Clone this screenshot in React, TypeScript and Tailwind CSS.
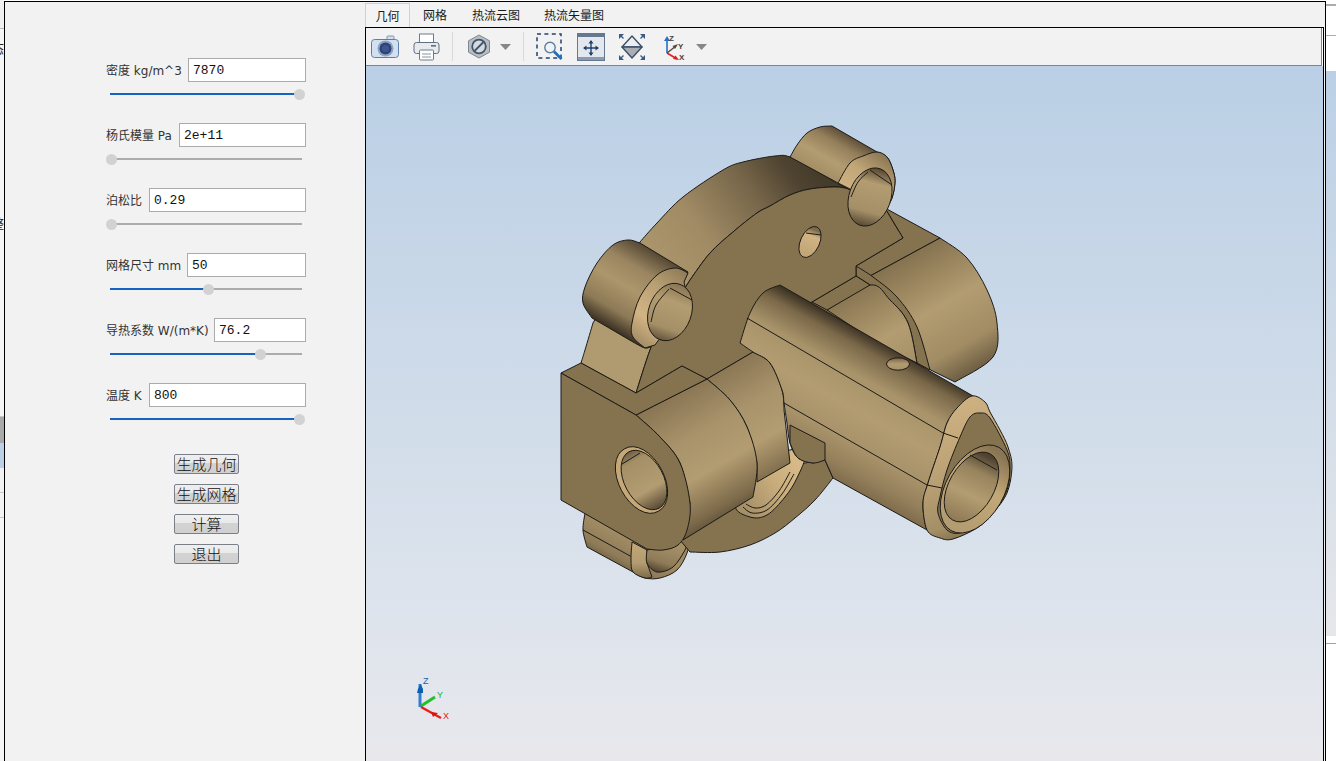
import React from "react";

type Pt = [number, number];
const parse = (s: string): Pt[] =>
  s.trim().split(/\s+/).map((p) => p.split(",").map(Number) as Pt);
const f = (n: number) => n.toFixed(1);
const seg = (a: Pt, b: Pt, c: Pt, d: Pt) =>
  `C${f(b[0] + (c[0] - a[0]) / 6)} ${f(b[1] + (c[1] - a[1]) / 6)} ${f(c[0] - (d[0] - b[0]) / 6)} ${f(c[1] - (d[1] - b[1]) / 6)} ${f(c[0])} ${f(c[1])}`;
const run = (pts: Pt[]) => {
  let out = "";
  for (let i = 0; i < pts.length - 1; i++) {
    out += seg(pts[Math.max(i - 1, 0)], pts[i], pts[i + 1], pts[Math.min(i + 2, pts.length - 1)]);
  }
  return out;
};
// each string is one smooth run; runs are joined by straight lines
const open = (...runs: string[]) =>
  runs
    .map((r, i) => {
      const p = parse(r);
      return `${i === 0 ? "M" : "L"}${f(p[0][0])} ${f(p[0][1])}${run(p)}`;
    })
    .join("");
const shut = (...runs: string[]) => open(...runs) + "Z";
const blob = (s: string) => {
  const p = parse(s);
  const n = p.length;
  let out = `M${f(p[0][0])} ${f(p[0][1])}`;
  for (let i = 0; i < n; i++) out += seg(p[(i - 1 + n) % n], p[i], p[(i + 1) % n], p[(i + 2) % n]);
  return out + "Z";
};
// rotated ellipse as a path, so that user-space gradients stay in page coordinates
const ell = (cx: number, cy: number, rx: number, ry: number, deg: number) => {
  const a = (deg * Math.PI) / 180;
  const dx = ry * Math.sin(a);
  const dy = -ry * Math.cos(a);
  return `M${f(cx + dx)} ${f(cy + dy)}A${rx} ${ry} ${deg} 1 0 ${f(cx - dx)} ${f(cy - dy)}A${rx} ${ry} ${deg} 1 0 ${f(cx + dx)} ${f(cy + dy)}Z`;
};

const FLAT = "#85724f";
const EDGE = "#1d1b17";

const Grad = ({ id, x1, y1, x2, y2, stops }: { id: string; x1: number; y1: number; x2: number; y2: number; stops: [number, string][] }) => (
  <linearGradient id={id} gradientUnits="userSpaceOnUse" x1={x1} y1={y1} x2={x2} y2={y2}>
    {stops.map(([o, c]) => (
      <stop key={o} offset={o} stopColor={c} />
    ))}
  </linearGradient>
);

function Part({ d, fill = FLAT }: { d: string; fill?: string }) {
  return <path d={d} fill={fill} stroke={EDGE} strokeWidth={1} strokeLinejoin="round" />;
}
function Line({ d }: { d: string }) {
  return <path d={d} fill="none" stroke={EDGE} strokeWidth={1} />;
}

function Model() {
  return (
    <svg className="block" width={958} height={695} viewBox="366 66 958 695">
      <defs>
        <Grad id="rim" x1={640} y1={290} x2={810} y2={165} stops={[[0, "#b09a70"], [0.4, "#a08b64"], [0.7, "#77664a"], [0.9, "#4f4431"], [1, "#463c2b"]]} />
        <Grad id="lobe" x1={905} y1={257} x2={980} y2={387} stops={[[0, "#85724f"], [0.4, "#b39c71"], [0.7, "#a18c64"], [0.9, "#6b5b41"], [1, "#3f3526"]]} />
        <Grad id="topLug" x1={855} y1={139} x2={830} y2={183} stops={[[0, "#5f5039"], [0.25, "#947f5b"], [0.6, "#b39c71"], [1, "#a08b63"]]} />
        <Grad id="leftLug" x1={664} y1={258} x2={620} y2={333} stops={[[0, "#574a35"], [0.25, "#9a8560"], [0.5, "#ac966c"], [0.8, "#8d7a56"], [1, "#3f3526"]]} />
        <Grad id="botLug" x1={612} y1={530} x2={592} y2={566} stops={[[0, "#a08b63"], [0.5, "#8f7b58"], [1, "#4a3f2c"]]} />
        <Grad id="body" x1={670} y1={398} x2={745} y2={528} stops={[[0, "#8a7654"], [0.3, "#a8936b"], [0.55, "#b39c71"], [0.8, "#7c6a4a"], [1, "#3a3123"]]} />
        <Grad id="tube" x1={860} y1={331} x2={791} y2={456} stops={[[0, "#3f3526"], [0.1, "#7a6849"], [0.28, "#a8936a"], [0.5, "#b39c71"], [0.72, "#a8926a"], [0.88, "#94805b"], [1, "#7e6b4b"]]} />
        <Grad id="tip" x1={945} y1={410} x2={985} y2={535} stops={[[0, "#cdb080"], [0.5, "#b9a074"], [0.85, "#a48f66"], [1, "#7e6b4b"]]} />
        <Grad id="tipRing" x1={950} y1={520} x2={1000} y2={455} stops={[[0, "#b39c71"], [0.6, "#c3a877"], [1, "#8a7654"]]} />
        <Grad id="holeA" x1={985} y1={455} x2={955} y2={520} stops={[[0, "#4e4230"], [0.25, "#97835d"], [0.6, "#b39c71"], [1, "#8e7a56"]]} />
        <Grad id="holeB" x1={625} y1={450} x2={660} y2={512} stops={[[0, "#5a4c36"], [0.2, "#a48f67"], [0.65, "#b39c71"], [1, "#463b2a"]]} />
        <Grad id="holeC" x1={680} y1={285} x2={660} y2={342} stops={[[0, "#8a7654"], [0.3, "#b39c71"], [0.75, "#a48f67"], [1, "#5a4c36"]]} />
        <Grad id="holeD" x1={880} y1={170} x2={865} y2={226} stops={[[0, "#5a4c36"], [0.25, "#b39c71"], [0.75, "#a48f67"], [1, "#5a4c36"]]} />
        <Grad id="holeE" x1={815} y1={230} x2={805} y2={255} stops={[[0, "#7c6a4a"], [0.25, "#d2b483"], [1, "#c1a576"]]} />
        <Grad id="holeF" x1={898} y1={357} x2={898} y2={371} stops={[[0, "#6b5b41"], [0.5, "#b39c71"], [1, "#a48f67"]]} />
        <Grad id="holeG" x1={670} y1={545} x2={660} y2={575} stops={[[0, "#a48f67"], [0.6, "#8f7b58"], [1, "#453a29"]]} />
        <Grad id="ring" x1={745} y1={510} x2={800} y2={470} stops={[[0, "#a48f67"], [0.6, "#c9ad7c"], [1, "#d6b987"]]} />
        <Grad id="fillet" x1={885} y1={155} x2={845} y2={210} stops={[[0, "#8a7654"], [0.4, "#c2a778"], [0.7, "#cdb080"], [1, "#b39c71"]]} />
        <Grad id="fillet2" x1={690} y1={270} x2={635} y2={345} stops={[[0, "#8a7654"], [0.35, "#b8a074"], [0.7, "#d2b484"], [1, "#9c8760"]]} />
        <Grad id="fillet3" x1={640} y1={540} x2={640} y2={578} stops={[[0, "#c4a878"], [0.6, "#b39c71"], [1, "#7e6b4b"]]} />
      </defs>

      {/* back rim of the flange */}
      <Part
        d={shut(
          "640,242 657,223 683,197 723,170 743,162 775,156 790,157 815,170 838,184",
          "852,190 837,187 810,189 790,195 770,206 757,213 733,232 710,253 690,280",
          "660,328 650,350 636,393",
          "581,363 585,350 593,323"
        )}
        fill="url(#rim)"
      />

      {/* filler behind the tube, so no background shows through the seams */}
      <path d="M795 300L880 270L925 380L840 370Z" fill={FLAT} />

      {/* right lobe behind the tube */}
      <Part d={shut("885,208", "940,238", "870,276", "856,276", "856,266", "903,238")} />
      <Part d={shut("940,238 967,258 987,290 997,323 993,357 955,382", "880,345", "870,276")} fill="url(#lobe)" />
      <Part d={shut("856,266 873,277 897,297 917,327 930,370", "917,363 908,323 890,300 870,285 856,276")} />
      <Part d={shut("827,310 870,285 890,300 908,323 917,363", "880,345")} fill="url(#lobe)" />
      <Part d={shut("812,302", "856,276", "870,285", "827,310")} />

      {/* flat face of the flange */}
      <Part
        d={shut(
          "690,280 710,253 733,232 757,213 770,206 790,195 810,189 837,187 852,190",
          "885,208 895,225 903,238",
          "856,266",
          "856,276",
          "812,302",
          "780,320",
          "753,352",
          "707,379",
          "682,366",
          "636,393 650,350 660,328 690,280"
        )}
      />
      <Part d={ell(810, 242, 9.5, 16.5, 25)} fill="url(#holeE)" />
      <Line d="M806 233L821 235" />

      {/* top lug */}
      <Part
        d={shut("790,157 797,145 807,133 820,127 832,126", "877,152 887,157 893,170 895,182 892,198 885,210", "838,183")}
        fill="url(#topLug)"
      />
      <Part
        d={shut("838,183 850,163 863,156 877,152 887,157 893,170 895,182 892,198 885,210", "866,224", "853,210", "852,190")}
        fill="url(#fillet)"
      />
      <Part d={ell(870, 197, 20.8, 30, 20)} fill="url(#holeD)" />
      <Line d="M870 170L892 185" />
      <Line d={open("851,197 858,182 868,172")} />

      {/* left lug */}
      <Part
        d={shut("640,243 628,240 613,245 597,263 585,287 583,303 592,318", "633,342 645,348 652,346", "688,272")}
        fill="url(#leftLug)"
      />
      <Part
        d={shut("688,273 675,268 657,275 640,297 632,323 633,337 645,348", "655,345", "688,300", "684,282")}
        fill="url(#fillet2)"
      />
      <Part d={ell(670, 312, 20.8, 29.4, 20)} fill="url(#holeC)" />
      <Line d="M670 288L692 300" />
      <Line d={open("651,322 656,305 669,289")} />

      {/* lower flange and the lug below */}
      <Part
        d={shut("585,513 583,530 587,547", "633,572 645,578 660,578 677,570 687,553 690,535", "640,540")}
        fill="url(#botLug)"
      />
      <Line d="M583 530L632 557" />
      <Part d={shut("632,542 631,560 633,572 645,578 652,577", "647,563 647,550")} fill="url(#fillet3)" />
      <Part d={shut("647,550 647,563 657,572 673,567 685,550 688,540")} fill="url(#holeG)" />
      <Part d={shut("833,478 815,500 795,518 775,533 750,545 720,552 690,552", "680,540", "757,470", "825,460")} />
      <Part d={blob("735,505 750,470 790,450 805,455 797,478 785,497 767,515 750,517")} fill="url(#ring)" />
      <Line d={open("743,507 752,513 767,510 782,494 794,474")} />
      <Line d={open("746,504 755,508 766,505 779,491 790,472")} />

      {/* front block and cylinders */}
      <Part d={shut("707,379", "753,352 770,363 782,390 784,410", "790,463", "757,482", "757,463 747,427 730,400 707,379")} fill="url(#body)" />
      <Part d={shut("636,415", "707,379 730,400 747,427 757,463 753,497", "683,540", "690,503 680,463 660,437 636,415")} fill="url(#body)" />
      <Part d={shut("561,373", "581,363", "636,393", "682,366", "707,379", "636,415")} />
      <Part d={shut("561,373", "636,415 660,437 680,463 690,503 687,530 678,545 663,550 647,549", "561,500")} />
      <Part d={ell(641.5, 480, 21.8, 35.5, -28)} fill="#c4a878" />
      <Part d={ell(644, 480, 19.5, 32, -28)} fill="url(#holeB)" />
      <Line d="M622 464L640 453" />

      {/* long tube */}
      <Part
        d={shut(
          "740,343 750,313 763,293 780,285",
          "980,400",
          "957,408 947,423 940,447 928,483 923,503 925,523 927,530",
          "833,478",
          "825,460",
          "813,463 798,458 790,443 787,423 784,403 782,390 770,363 753,352 740,343"
        )}
        fill="url(#tube)"
      />
      <Part d={shut("790,425", "825,443", "825,460 813,463 798,458 790,443")} />
      <Line d="M747 318L943 433" />
      <Line d="M784 403L927 485" />
      <Part d={ell(898, 364, 11.5, 6.2, 0)} fill="url(#holeF)" />

      {/* end of the tube */}
      <Part
        d={blob("972,396 985,402 990,412 1000,430 1008,447 1012,467 1007,493 993,513 977,528 953,539 940,538 927,530 923,503 928,483 940,447 947,423 957,408")}
        fill="url(#tip)"
      />
      <Part d={blob("980,413 990,418 1007,450 1010,468 1007,490 993,513 975,524 960,533 947,530 938,513 940,497 947,470 960,437 970,417")} />
      <Line d="M943 433L958 438" />
      <Line d="M927 485L942 488" />
      <Part d={ell(975, 489, 29, 48, 30)} fill="url(#tipRing)" />
      <Part d={ell(971.5, 487, 22, 38, 30)} fill="url(#holeA)" />
      <Line d="M970 455L997 470" />

      {/* axis triad */}
      <path d="M420 707L420 684" stroke="#2f7fd0" strokeWidth={3} />
      <path d="M417 693L423 693L423 689L420.5 684L418 689Z" fill="#0a5fb5" />
      <path d="M421 706L435 697" stroke="#22c02a" strokeWidth={3} />
      <path d="M421 707L441 718" stroke="#ec1c1c" strokeWidth={2.5} />
      <path d="M431 712L438 713L433 717Z" fill="#e01010" />
      <text x={423} y={684} fontSize={9} fill="#1f5fa8" fontFamily="'Liberation Sans',sans-serif">Z</text>
      <text x={437} y={698} fontSize={9} fill="#22b02a" fontFamily="'Liberation Sans',sans-serif">Y</text>
      <text x={443} y={719} fontSize={9} fill="#e01818" fontFamily="'Liberation Sans',sans-serif">X</text>
    </svg>
  );
}

function Caret() {
  return (
    <svg width={11} height={6} viewBox="0 0 11 6" className="block">
      <path d="M0 0H11L5.5 6Z" fill="#85878a" />
    </svg>
  );
}
function Sep() {
  return <div className="h-[29px] w-px bg-[#d9d9d9]" />;
}

function Toolbar() {
  return (
    <div className="flex h-[38px] items-center border-b border-r border-[#808488] bg-[#f2f2f2] mr-px">
      <svg className="ml-[5px] block" width={28} height={24} viewBox="0 0 28 24">
        <rect x={16} y={1} width={7} height={5} rx={1} fill="#d2dfee" stroke="#7d97b8" />
        <rect x={0.5} y={4.5} width={27} height={18} rx={3} fill="#d2e0f0" stroke="#5d7ea8" />
        <circle cx={14.5} cy={13.5} r={8} fill="#8ea3c0" />
        <circle cx={14.5} cy={13.5} r={6} fill="#2e4379" />
        <circle cx={14.5} cy={13.5} r={3.5} fill="#3f5590" />
      </svg>
      <svg className="ml-[14px] block" width={27} height={28} viewBox="0 0 27 28">
        <rect x={6.5} y={1} width={14} height={9} fill="#fff" stroke="#6e7b88" />
        <rect x={1} y={9.5} width={25} height={11} rx={2.5} fill="#e8ebee" stroke="#5f6f80" />
        <rect x={18} y={12} width={5} height={1.6} fill="#5f6f80" />
        <rect x={6.5} y={17} width={14} height={10} rx={1} fill="#fff" stroke="#6e7b88" />
        <path d="M9 21H18M9 24H18" stroke="#8a96a2" />
      </svg>
      <div className="ml-[12px]"><Sep /></div>
      <svg className="ml-[14px] block" width={24} height={25} viewBox="0 0 24 25">
        <path d="M12 1L22.5 6.8V18.2L12 24L1.5 18.2V6.8Z" fill="#b8bec2" stroke="#7e8890" />
        <circle cx={12} cy={12.5} r={6.8} fill="#d5dade" stroke="#43556e" strokeWidth={1.8} />
        <path d="M7.5 17L16.5 8" stroke="#43556e" strokeWidth={1.8} />
      </svg>
      <div className="ml-[9px]"><Caret /></div>
      <div className="ml-[12px]"><Sep /></div>
      <svg className="ml-[12px] block" width={27} height={27} viewBox="0 0 27 27">
        <rect x={1} y={1} width={24} height={24} fill="none" stroke="#24406e" strokeWidth={1.5} strokeDasharray="4 3.4" />
        <circle cx={14} cy={14.5} r={5.2} fill="#eef3f8" stroke="#5d7d9e" strokeWidth={1.4} />
        <path d="M18 18.5L25.5 26" stroke="#1a6fc0" strokeWidth={2.6} />
      </svg>
      <svg className="ml-[14px] block" width={28} height={28} viewBox="0 0 28 28">
        <rect x={0.5} y={0.5} width={27} height={27} fill="#e3e8ee" stroke="#64788f" />
        <rect x={1} y={1} width={26} height={3} fill="#64788f" />
        <rect x={1} y={24} width={26} height={3} fill="#8b9cb0" />
        <path d="M14 8V22M7 15H21" stroke="#22406e" strokeWidth={1.4} />
        <path d="M14 7L11.5 10.5H16.5ZM14 23L11.5 19.5H16.5ZM6 15L9.5 12.5V17.5ZM22 15L18.5 12.5V17.5Z" fill="#22406e" />
      </svg>
      <svg className="ml-[13px] block" width={28} height={28} viewBox="0 0 28 28">
        <path d="M14 3L24 14H4Z" fill="#eceff2" stroke="#3d4f68" strokeWidth={1.4} strokeLinejoin="round" />
        <path d="M4 14H24L14 25Z" fill="#a9aeb4" stroke="#3d4f68" strokeWidth={1.4} strokeLinejoin="round" />
        <path d="M1 6V1H6ZM27 6V1H22ZM1 22V27H6ZM27 22V27H22Z" fill="#3d5a86" />
        <path d="M2 2L5.5 5.5M26 2L22.5 5.5M2 26L5.5 22.5M26 26L22.5 22.5" stroke="#3d5a86" strokeWidth={1.4} />
      </svg>
      <svg className="ml-[16px] block" width={25} height={28} viewBox="0 0 25 28">
        <path d="M5 20V6" stroke="#2a6fc0" strokeWidth={1.6} />
        <path d="M5 3L2 8H8Z" fill="#2a6fc0" />
        <path d="M5 20L14 13" stroke="#554a3a" strokeWidth={1.4} />
        <path d="M16 11L10.5 13L13 16Z" fill="#554a3a" />
        <path d="M5 20L15 26" stroke="#e02020" strokeWidth={1.6} />
        <path d="M17 27L11 26L13.5 22.5Z" fill="#e02020" />
        <text x={7} y={8} fontSize={8} fontWeight={700} fill="#444" fontFamily="'Liberation Sans',sans-serif">Z</text>
        <text x={16} y={16} fontSize={8} fontWeight={700} fill="#444" fontFamily="'Liberation Sans',sans-serif">Y</text>
        <text x={17} y={27} fontSize={8} fontWeight={700} fill="#444" fontFamily="'Liberation Sans',sans-serif">X</text>
      </svg>
      <div className="ml-[9px]"><Caret /></div>
    </div>
  );
}

const params = [
  { label: "密度 kg/m^3", value: "7870", inputClass: "w-[118px]", pos: 100 },
  { label: "杨氏模量 Pa", value: "2e+11", inputClass: "w-[127px]", pos: 0 },
  { label: "泊松比", value: "0.29", inputClass: "w-[157px]", pos: 0 },
  { label: "网格尺寸 mm", value: "50", inputClass: "w-[119px]", pos: 51.6 },
  { label: "导热系数 W/(m*K)", value: "76.2", inputClass: "w-[92px]", pos: 79.3 },
  { label: "温度 K", value: "800", inputClass: "w-[157px]", pos: 100 },
];

function Param({ label, value, inputClass, pos }: (typeof params)[number]) {
  const thumbX = 1 + (188 * pos) / 100;
  return (
    <div className="h-[65px] w-[200px]">
      <div className="flex h-6 items-center justify-between">
        <span className="whitespace-nowrap pt-[2px] font-['DejaVu_Sans','Noto_Sans_CJK_SC',sans-serif] text-xs text-[#333]">{label}</span>
        <input
          readOnly
          value={value}
          className={`${inputClass} h-6 border border-[#ababab] bg-white px-[4px] font-['Liberation_Mono',monospace] text-[13px] text-[#111] outline-none`}
        />
      </div>
      <div className="relative ml-1 mt-[11px] h-[2px] w-[192px] bg-[#acacac]">
        <div className="h-full bg-[#1565c0]" style={{ width: thumbX }} />
        <div
          className="absolute top-[-4.5px] ml-[-5.5px] h-[11px] w-[11px] rounded-full bg-[#d2d2d2]"
          style={{ left: thumbX }}
        />
      </div>
    </div>
  );
}

function ActionButton({ children }: { children: React.ReactNode }) {
  return (
    <button className="flex h-5 w-[65px] items-center justify-center rounded-[2px] border border-[#7b8088] bg-[linear-gradient(#efefef_0%,#e9e9e9_45%,#d3d3d3_46%,#d0d0d0_100%)] p-0 pb-[2px] text-[15px] font-light leading-none text-[#111]">
      {children}
    </button>
  );
}

function LeftEdge() {
  return (
    <div className="flex h-full w-1 flex-col overflow-hidden bg-[#f6f6f6] text-[13px] leading-4 text-[#222]">
      <div className="h-[29px] border-b border-[#b9b9b9] bg-[#f0f0f0]" />
      <div className="mt-[11px] h-4 whitespace-nowrap"><span className="ml-[-9px]">态</span></div>
      <div className="mt-[159px] h-4 whitespace-nowrap"><span className="ml-[-9px]">整</span></div>
      <div className="mt-[181px] h-[5px] border-b border-[#c8c8c8]" />
      <div className="h-[26px] bg-[#a9a9a9]" />
      <div className="h-[25px] bg-[#bcd0e6]" />
      <div className="h-[25px] border-b border-[#c8c8c8] bg-[#f2f2f2]" />
      <div className="h-[25px] border-b border-[#c8c8c8] bg-[#f2f2f2]" />
    </div>
  );
}

function RightEdge() {
  return (
    <div className="flex h-full flex-1 flex-col bg-white">
      <div className="mt-1 h-[2px] bg-[#acacac]" />
      <div className="mt-[29px] h-px bg-[#acacac]" />
      <div className="mt-[35px] h-[565px] bg-[linear-gradient(#bbd0e6,#e6e7ea)]" />
      <div className="mt-[7px] h-px bg-[#9aa4ae]" />
    </div>
  );
}

export default function App() {
  return (
    <div className="flex h-[761px] w-[1336px] overflow-hidden bg-white font-['Noto_Sans_CJK_SC','Noto_Sans',sans-serif]">
      <LeftEdge />
      <div className="mt-px flex h-[760px] w-[1322px] border-x border-t border-black bg-[#f2f2f2]">
        {/* parameter panel */}
        <div className="w-[360px] pl-[101px] pt-[56px]">
          {params.map((p) => (
            <Param key={p.label} {...p} />
          ))}
          <div className="ml-[68px] mt-[6px] flex flex-col gap-[10px]">
            <ActionButton>生成几何</ActionButton>
            <ActionButton>生成网格</ActionButton>
            <ActionButton>计算</ActionButton>
            <ActionButton>退出</ActionButton>
          </div>
        </div>
        {/* viewer */}
        <div className="flex w-[960px] flex-col">
          <div className="flex h-[25px] items-end text-xs text-[#1a1a1a]">
            <div className="flex h-6 w-[45px] items-center justify-center border-x border-t border-[#d0d0d0] bg-[#f4f4f4]">几何</div>
            <div className="flex h-6 items-center pl-[13px] pr-[13px]">网格</div>
            <div className="flex h-6 items-center px-3">热流云图</div>
            <div className="flex h-6 items-center px-3">热流矢量图</div>
          </div>
          <div className="mr-px flex-1 overflow-hidden border-l border-r border-t border-black bg-white">
            <Toolbar />
            <div className="h-[695px] bg-[linear-gradient(#bacfe5_0%,#dce3ec_75%,#e8e8ec_100%)]">
              <Model />
            </div>
          </div>
        </div>
      </div>
      <RightEdge />
    </div>
  );
}
